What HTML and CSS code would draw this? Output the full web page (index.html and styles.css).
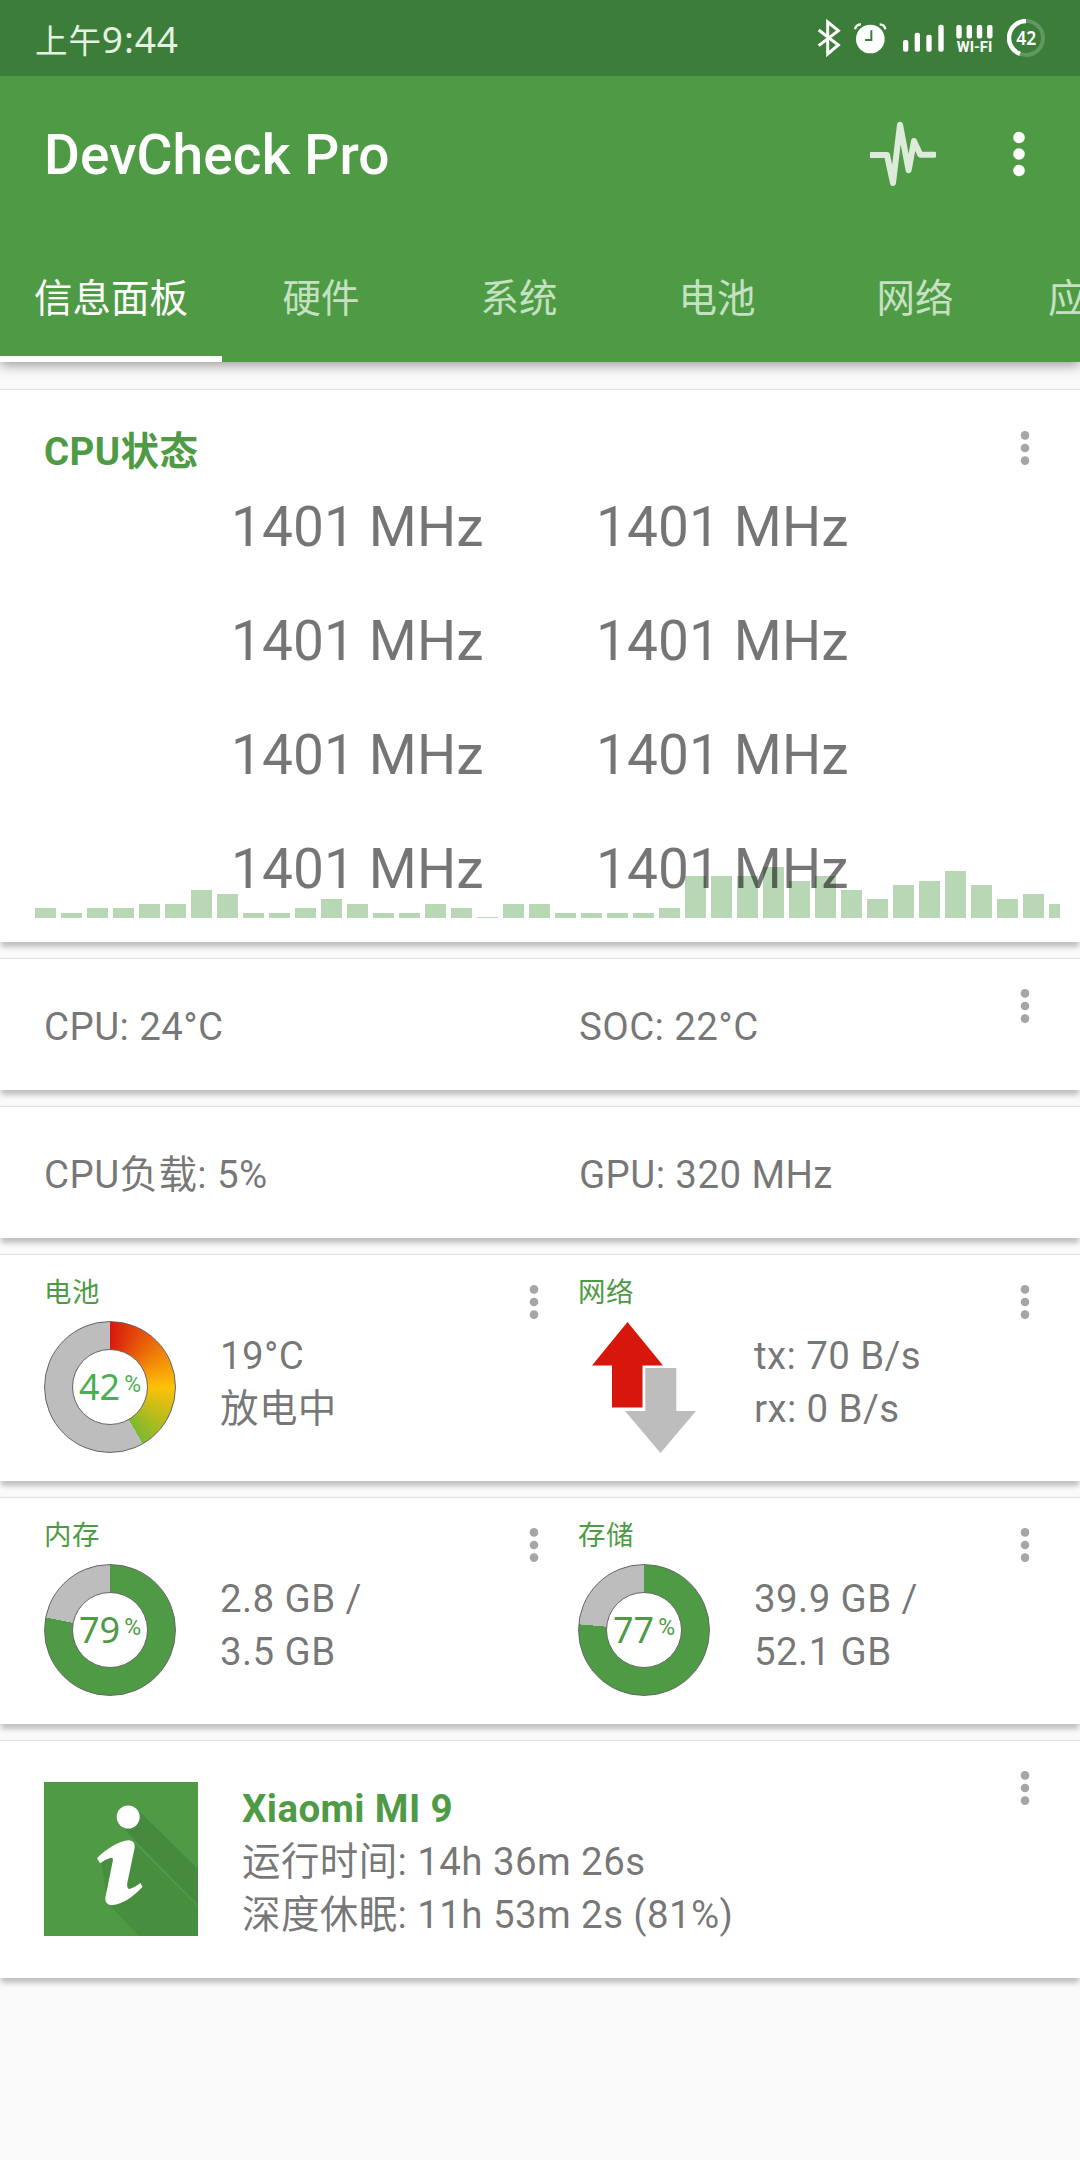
FILE: index.html
```html
<!DOCTYPE html>
<html lang="zh-CN">
<head>
    <meta charset="UTF-8">
    <meta name="viewport" content="width=device-width, initial-scale=1.0">
    <title>DevCheck Pro</title>
    <link rel="stylesheet" href="styles.css">
</head>
<body>
    <svg width="0" height="0" class="defs">
        <symbol id="dots" viewBox="0 0 10 36">
            <circle cx="5" cy="5.4" r="4.3"/>
            <circle cx="5" cy="18" r="4.3"/>
            <circle cx="5" cy="30.6" r="4.3"/>
        </symbol>
    </svg>

    <header class="header">
        <div class="status-bar">
            <div class="time"><span class="ampm">上午</span>9:44</div>
            <div class="status-icons">
                <svg class="bluetooth" width="24" height="40" viewBox="112 56 72 120">
                    <path d="M117 92L176 137L144 164V68L176 94L117 139" fill="none" stroke="#fff" stroke-width="9"/>
                </svg>
                <svg class="alarm" width="34" height="32" viewBox="220 66 102 96">
                    <path d="M226 88Q229 73 244 73M300 73Q315 73 317 88" fill="none" stroke="#fff" stroke-width="7"/>
                    <circle cx="272" cy="117" r="43" fill="#fff"/>
                    <path d="M275 91V120H256" fill="none" stroke="#3b7d39" stroke-width="6"/>
                </svg>
                <svg class="signal" width="41" height="28" viewBox="369 70 123 84" fill="#fff">
                    <rect x="369" y="118" width="16" height="35" rx="6"/>
                    <rect x="404" y="96" width="16" height="57" rx="6"/>
                    <rect x="439" y="102" width="16" height="51" rx="6"/>
                    <rect x="475" y="72" width="16" height="81" rx="6"/>
                </svg>
                <svg class="wifi" width="38" height="34" viewBox="0 0 38 34" fill="#fff">
                    <rect x="0.3" y="4" width="5.4" height="13.4" rx="2"/>
                    <rect x="10.6" y="4" width="5.4" height="13.4" rx="2"/>
                    <rect x="20.8" y="4" width="5.4" height="13.4" rx="2"/>
                    <rect x="31.1" y="4" width="5.4" height="13.4" rx="2"/>
                    <text x="0.8" y="30.7" textLength="35.5" lengthAdjust="spacingAndGlyphs">WI-FI</text>
                </svg>
                <svg class="level" width="38" height="38" viewBox="0 0 38 38">
                    <circle cx="19" cy="19" r="17" fill="none" stroke="#fff" stroke-opacity=".2" stroke-width="4"/>
                    <path d="M19 2A17 17 0 0 0 13 34.9" fill="none" stroke="#fff" stroke-width="4.4"/>
                    <text x="19.2" y="26" text-anchor="middle" textLength="20" lengthAdjust="spacingAndGlyphs">42</text>
                </svg>
            </div>
        </div>
        <div class="toolbar">
            <h1>DevCheck Pro</h1>
            <svg class="pulse" width="66" height="66" viewBox="270 360 198 198">
                <path d="M275 462H321L339 546L360 371L386 508L402 420L421 461H463" fill="none" stroke="#fff" stroke-opacity=".8" stroke-width="18" stroke-linecap="round" stroke-linejoin="round"/>
            </svg>
            <svg class="menu" width="14" height="48" viewBox="0 0 14 48" fill="#fff">
                <circle cx="7" cy="7.5" r="5.8"/>
                <circle cx="7" cy="24" r="5.8"/>
                <circle cx="7" cy="40.5" r="5.8"/>
            </svg>
        </div>
        <nav class="tabs">
            <div class="tab wide active">信息面板</div>
            <div class="tab">硬件</div>
            <div class="tab">系统</div>
            <div class="tab">电池</div>
            <div class="tab">网络</div>
            <div class="tab wide">应用程序</div>
        </nav>
    </header>

    <main>
        <section class="card cpu">
            <div class="chart" id="chart"></div>
            <h2>CPU状态</h2>
            <svg class="more"><use href="#dots"/></svg>
            <div class="cores">
                <span>1401 MHz</span><span>1401 MHz</span>
                <span>1401 MHz</span><span>1401 MHz</span>
                <span>1401 MHz</span><span>1401 MHz</span>
                <span>1401 MHz</span><span>1401 MHz</span>
            </div>
        </section>

        <section class="card line">
            <span>CPU: 24°C</span>
            <span>SOC: 22°C</span>
            <svg class="more"><use href="#dots"/></svg>
        </section>

        <section class="card line">
            <span>CPU负载: 5%</span>
            <span>GPU: 320 MHz</span>
        </section>

        <section class="card pair">
            <div class="cell">
                <h3>电池</h3>
                <div class="info">
                    <div class="donut battery">
                        <div class="hole"><b>42</b><i>%</i></div>
                    </div>
                    <p>19°C<br>放电中</p>
                </div>
                <svg class="more"><use href="#dots"/></svg>
            </div>
            <div class="cell">
                <h3>网络</h3>
                <div class="info">
                    <svg class="arrows" width="132" height="132" viewBox="0 0 132 132">
                        <path d="M49.5 1L85 44.5H64.5V86.5H34V44.5H14Z" fill="#d8170c"/>
                        <path d="M67.3 47H98.3V90H118L82.5 132L47 90H67.3Z" fill="#bdbdbd"/>
                    </svg>
                    <p>tx: 70 B/s<br>rx: 0 B/s</p>
                </div>
                <svg class="more"><use href="#dots"/></svg>
            </div>
        </section>

        <section class="card pair">
            <div class="cell">
                <h3>内存</h3>
                <div class="info">
                    <div class="donut memory">
                        <div class="hole"><b>79</b><i>%</i></div>
                    </div>
                    <p>2.8 GB /<br>3.5 GB</p>
                </div>
                <svg class="more"><use href="#dots"/></svg>
            </div>
            <div class="cell">
                <h3>存储</h3>
                <div class="info">
                    <div class="donut storage">
                        <div class="hole"><b>77</b><i>%</i></div>
                    </div>
                    <p>39.9 GB /<br>52.1 GB</p>
                </div>
                <svg class="more"><use href="#dots"/></svg>
            </div>
        </section>

        <section class="card device">
            <svg class="logo" width="154" height="154" viewBox="0 0 154 154">
                <rect width="154" height="154" fill="#4f9b45"/>
                <path d="M93 27L154 87V123L76 43Z" opacity=".1"/>
                <path d="M90 61L154 125V154H95L64 122L57 81Z" opacity=".08"/>
                <circle cx="84.2" cy="35" r="11.5" fill="#fff"/>
                <path d="M53 76.3C62 67 75 59 85 58.3Q91.500 59 90.600 66L83.300 101Q82.500 106 85 107Q90 106 96.400 101L98.500 104.700C89 115 79 122 68 123.300Q61 123 61.300 116L68.800 79Q69.500 75 66 76Q61 77.500 56 81.300Z" fill="#fff"/>
            </svg>
            <div>
                <h2>Xiaomi MI 9</h2>
                <p>运行时间: 14h 36m 26s<br>深度休眠: 11h 53m 2s (81%)</p>
            </div>
            <svg class="more"><use href="#dots"/></svg>
        </section>
    </main>

    <script>
        // CPU load history
        const load = [
            10, 5, 10, 10, 14, 14, 28, 24, 5, 5, 10, 19, 14, 5, 5, 14, 10, 1, 14, 14,
            5, 5, 5, 5, 10, 42, 42, 42, 51, 37, 42, 28, 19, 33, 37, 47, 33, 19, 24, 14
        ];
        const chart = document.getElementById('chart');
        load.forEach(value => {
            const bar = document.createElement('div');
            bar.className = 'bar';
            bar.style.height = value + 'px';
            chart.appendChild(bar);
        });
    </script>
</body>
</html>
```
FILE: styles.css
```css
* {
    box-sizing: border-box;
}
body {
    margin: 0;
    width: 1080px;
    min-height: 2160px;
    overflow: hidden;
    background: #fafafa;
    color: rgba(0, 0, 0, 0.54);
    font-family: Roboto, "Noto Sans CJK SC", sans-serif;
    font-size: 38.5px;
    line-height: 53px;
    letter-spacing: 0.4px;
}
h1, h2, h3, p {
    margin: 0;
}
.defs {
    position: absolute;
}

/* header */
.header {
    height: 362px;
    background: #4f9b45;
    color: #fff;
    box-shadow: 0 3px 12px rgba(0, 0, 0, 0.4);
}
.status-bar {
    height: 76px;
    padding: 0 35px;
    display: flex;
    justify-content: space-between;
    align-items: center;
    background: #3b7d39;
}
.time {
    color: #e4f2e2;
    font-family: "Noto Sans", "Noto Sans CJK SC", sans-serif;
    font-size: 37px;
    letter-spacing: 0.9px;
}
.ampm {
    font-family: "Noto Sans CJK SC", sans-serif;
    font-size: 32.5px;
}
.status-icons {
    display: flex;
    align-items: center;
    letter-spacing: 0;
}
.alarm {
    margin-left: 12px;
}
.signal {
    margin-left: 16px;
}
.wifi {
    margin-left: 12px;
    font: bold 14.5px Roboto, sans-serif;
}
.level {
    margin-left: 13px;
    fill: #fff;
    font: 600 19px "Noto Sans", sans-serif;
}
.toolbar {
    height: 156px;
    padding: 0 54px 0 44px;
    display: flex;
    align-items: center;
}
.toolbar h1 {
    flex: 1;
    padding-top: 3px;
    font-size: 55px;
    font-weight: 500;
    letter-spacing: 0.1px;
}
.menu {
    margin-left: 76px;
}
.tabs {
    height: 130px;
    display: flex;
    overflow: hidden;
    letter-spacing: 0;
}
.tab {
    flex: none;
    width: 198px;
    padding-top: 40px;
    text-align: center;
    color: #c5e1c2;
}
.tab.wide {
    width: 222px;
}
.tab.active {
    color: #fff;
    border-bottom: 6px solid #fff;
}

/* cards */
main {
    padding-top: 28px;
    display: flex;
    flex-direction: column;
    gap: 17px;
}
.card {
    position: relative;
    background: #fff;
    box-shadow: 0 -1px 1px #e2e2e2, 0 6px 5px -1px rgba(0, 0, 0, 0.23);
}
.more {
    position: absolute;
    top: 29px;
    right: 50px;
    width: 10px;
    height: 36px;
    fill: #a6a6a6;
}
h2 {
    color: #4f9b45;
    font-size: 38.5px;
    font-weight: bold;
}
.cpu {
    height: 552px;
    padding-top: 35px;
}
.cpu h2 {
    padding-left: 44px;
}
.cpu .more {
    top: 40px;
}
.chart {
    position: absolute;
    left: 35px;
    bottom: 24px;
    width: 1025px;
    display: flex;
    align-items: flex-end;
    gap: 5px;
    overflow: hidden;
}
.bar {
    flex: none;
    width: 21px;
    background: #b8d7b5;
}
.cores {
    position: relative;
    margin: -8px 0 0 231px;
    display: grid;
    grid-template-columns: 365px 365px;
    grid-auto-rows: 114px;
    align-items: center;
    font-size: 55px;
    letter-spacing: 0.1px;
}
.line {
    height: 131px;
    padding: 4px 0 0 44px;
    display: grid;
    grid-template-columns: 535px auto;
    align-items: center;
}
.pair {
    height: 226px;
    display: grid;
    grid-template-columns: 534px 546px;
}
.cell {
    position: relative;
    padding: 17px 0 0 44px;
}
.cell h3 {
    height: 49px;
    line-height: 42px;
    color: #4f9b45;
    font-size: 27.5px;
    font-weight: normal;
}
.cell:first-child .more {
    right: -5px;
}
.info {
    display: flex;
    gap: 44px;
}
.info p {
    padding-top: 8px;
}
.donut {
    width: 132px;
    height: 132px;
    padding: 27px;
    border: 1px solid #666;
    border-radius: 50%;
    color: #4f9b45;
}
.battery {
    color: #4caf50;
    background: conic-gradient(#d8170c, #ffc107 90deg, #7cb82f 150deg, #bdbdbd 150deg);
}
.memory {
    background: conic-gradient(#4f9b45 281deg, #bdbdbd 281deg);
}
.storage {
    background: conic-gradient(#4f9b45 275deg, #bdbdbd 275deg);
}
.hole {
    width: 76px;
    height: 76px;
    display: flex;
    justify-content: center;
    gap: 4px;
    background: #fff;
    border: 1px solid #666;
    border-radius: 50%;
    font-family: "Noto Sans", sans-serif;
    line-height: 74px;
    letter-spacing: 0;
}
.hole b {
    font-size: 36px;
    font-weight: normal;
}
.hole i {
    font: normal 23px/69px Roboto, sans-serif;
}
.device {
    height: 237px;
    padding: 41px 44px;
    display: flex;
    gap: 44px;
}
```
